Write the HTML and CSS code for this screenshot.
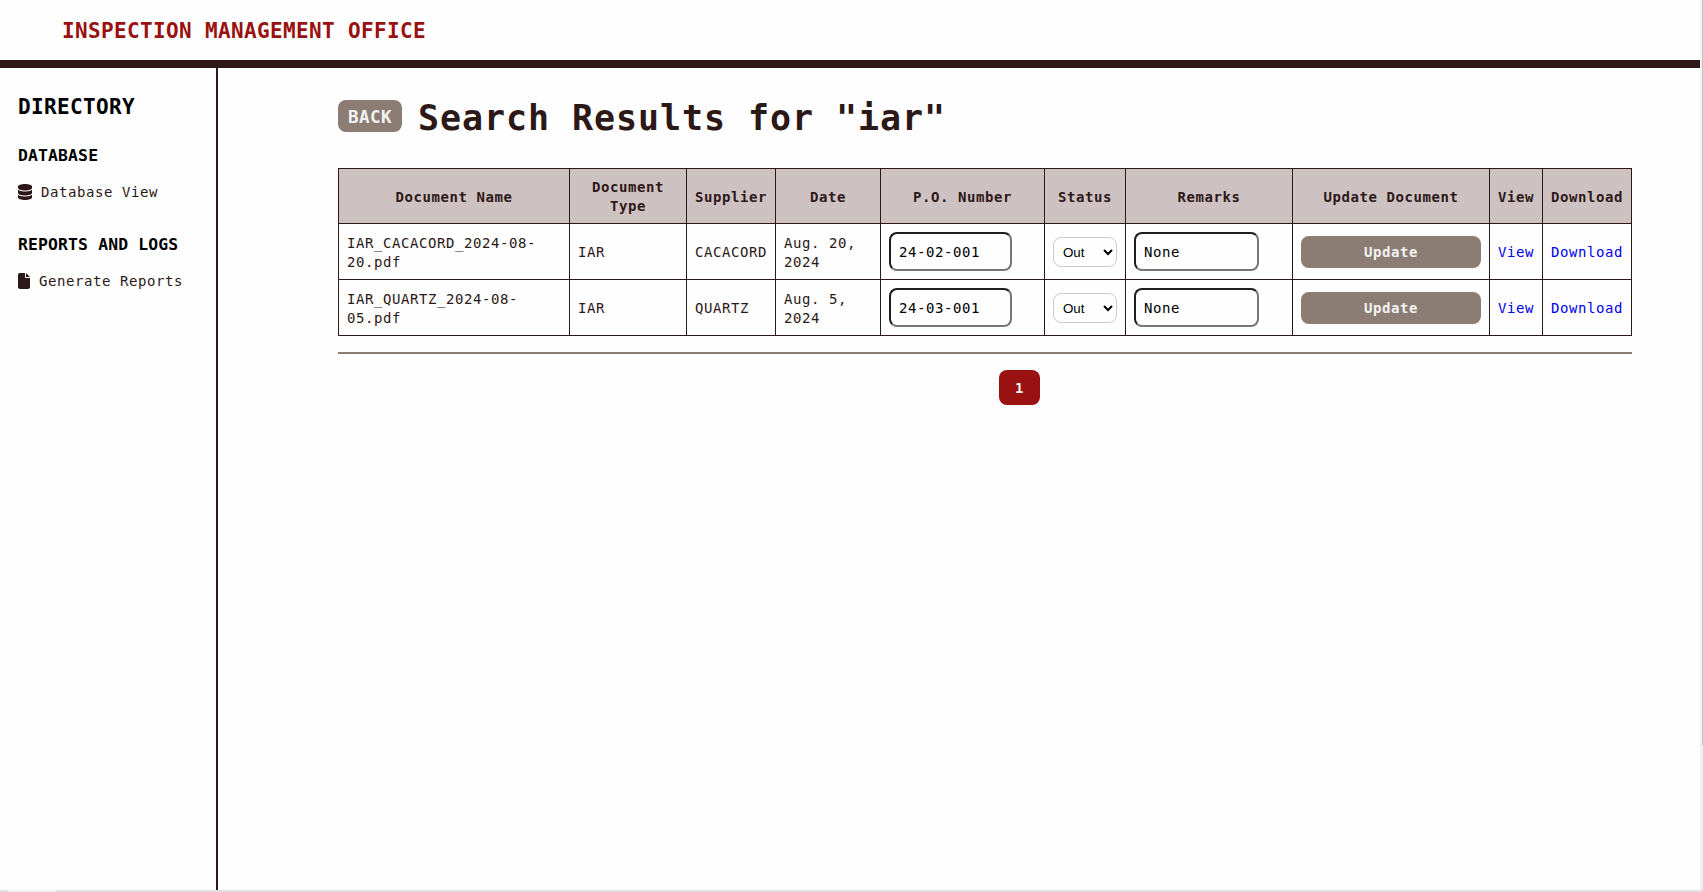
FILE: index.html
```html
<!DOCTYPE html>
<html lang="en">
<head>
<meta charset="utf-8">
<title>Inspection Management Office</title>
<link rel="stylesheet" href="styles.css">
</head>
<body>
<div class="frame">
  <div class="app">
    <header class="topbar"><h2 class="brand">INSPECTION MANAGEMENT OFFICE</h2></header>
    <div class="body">
      <nav class="sidebar">
        <h2 class="directory">DIRECTORY</h2>
        <h3 class="group">DATABASE</h3>
        <a class="nav-link"><svg class="icon-db" viewBox="0 0 448 512"><path d="M448 80v48c0 44.2-100.3 80-224 80S0 172.2 0 128V80C0 35.8 100.3 0 224 0S448 35.8 448 80zM393.2 214.7c20.8-7.4 39.9-16.9 54.8-28.6V288c0 44.2-100.3 80-224 80S0 332.2 0 288V186.1c14.9 11.8 34 21.2 54.8 28.6C99.7 230.7 159.5 240 224 240s124.3-9.3 169.2-25.3zM0 346.1c14.9 11.8 34 21.2 54.8 28.6C99.7 390.7 159.5 400 224 400s124.3-9.3 169.2-25.3c20.8-7.4 39.9-16.9 54.8-28.6V432c0 44.2-100.3 80-224 80S0 476.2 0 432V346.1z"/></svg><span>Database View</span></a>
        <h3 class="group group-reports">REPORTS AND LOGS</h3>
        <a class="nav-link"><svg class="icon-file" viewBox="0 0 384 512"><path d="M0 64C0 28.7 28.7 0 64 0H224V128c0 17.7 14.3 32 32 32H384V448c0 35.3-28.7 64-64 64H64c-35.3 0-64-28.7-64-64V64zm384 64H256V0L384 128z"/></svg><span>Generate Reports</span></a>
      </nav>
      <main class="content">
        <div class="heading"><button class="back">BACK</button><h1 class="title">Search Results for "iar"</h1></div>
        <table class="results">
          <colgroup><col class="c-name"><col class="c-type"><col class="c-supplier"><col class="c-date"><col class="c-po"><col class="c-status"><col class="c-remarks"><col class="c-update"><col class="c-view"><col class="c-download"></colgroup>
          <thead><tr><th>Document Name</th><th>Document Type</th><th>Supplier</th><th>Date</th><th>P.O. Number</th><th>Status</th><th>Remarks</th><th>Update Document</th><th>View</th><th>Download</th></tr></thead>
          <tbody>
            <tr><td>IAR_CACACORD_2024-08-<br>20.pdf</td><td>IAR</td><td>CACACORD</td><td>Aug. 20, 2024</td><td><input class="field po" value="24-02-001"></td><td><select class="status"><option>Out</option></select></td><td><input class="field remarks" value="None"></td><td><button class="update">Update</button></td><td><a class="link">View</a></td><td><a class="link">Download</a></td></tr>
            <tr><td>IAR_QUARTZ_2024-08-<br>05.pdf</td><td>IAR</td><td>QUARTZ</td><td>Aug. 5, 2024</td><td><input class="field po" value="24-03-001"></td><td><select class="status"><option>Out</option></select></td><td><input class="field remarks" value="None"></td><td><button class="update">Update</button></td><td><a class="link">View</a></td><td><a class="link">Download</a></td></tr>
          </tbody>
        </table>
        <hr class="rule">
        <div class="pagination"><a class="page">1</a></div>
      </main>
    </div>
  </div>
  <div class="scroll-y"><div class="thumb-y"></div></div>
  <div class="scroll-x"><div class="thumb-x"></div></div>
</div>
</body>
</html>
```
FILE: styles.css
```css
* { box-sizing: border-box; }
html, body { margin: 0; height: 100%; overflow: hidden; }
body {
  background: #fefefe;
  color: #2d1818;
  font-family: "DejaVu Sans Mono", monospace;
  font-size: 14px;
  letter-spacing: 0.57px;
  line-height: 19px;
}
h1, h2, h3 { margin: 0; }
.frame { display: grid; grid-template-columns: 1fr 3px; grid-template-rows: 1fr 2px; height: 892px; }
.app { display: flex; flex-direction: column; min-width: 0; }
.topbar { height: 68px; border-bottom: 8px solid #2d1818; padding: 17px 62px 0; }
.brand { font-size: 21px; line-height: 28px; letter-spacing: 0.36px; color: #991111; }
.body { flex: 1; display: flex; }
.sidebar { width: 218px; border-right: 2px solid #2d1818; padding: 25px 0 0 18px; white-space: nowrap; }
.directory { color: #000; font-size: 21px; line-height: 28px; letter-spacing: 0.36px; }
.group { color: #000; font-size: 16.4px; line-height: 22px; letter-spacing: 0.15px; margin-top: 24px; }
.group-reports { margin-top: 32px; }
.nav-link { display: flex; align-items: center; gap: 9px; height: 20px; margin-top: 15px; }
.nav-link svg { fill: #2d1818; height: 16px; flex: none; }
.icon-db { width: 14px; }
.icon-file { width: 12px; }
.content { flex: 1; padding: 25px 68px 0 120px; }
.heading { display: flex; align-items: center; gap: 16px; height: 47px; }
button { border: 0; border-radius: 8px; background: #8b7d73; color: #f2f2f2; font-family: inherit; font-weight: bold; padding: 0; height: 32px; }
.back { width: 64px; font-size: 17.5px; letter-spacing: 0.47px; margin-top: -1px; padding-top: 1px; }
.title { font-size: 35px; line-height: 47px; letter-spacing: 0.93px; padding-top: 3px; }
.results { width: 1294px; margin-top: 28px; table-layout: fixed; border-collapse: collapse; }
.results th, .results td { border: 1px solid #2d1818; padding: 9px 8px 7px; }
.results th { background: #cdc1c1; height: 55px; padding: 9px 4px 7px; }
.results td { height: 56px; text-align: left; vertical-align: middle; }
.c-name { width: 231px; }
.c-type { width: 117px; }
.c-supplier { width: 89px; }
.c-date { width: 105px; }
.c-po { width: 164px; }
.c-status { width: 81px; }
.c-remarks { width: 167px; }
.c-update { width: 197px; }
.c-view { width: 53px; }
.c-download { width: 89px; }
.field, .status, .update { display: block; margin: -1px 0 1px; }
.field { height: 39px; border: 2px solid; border-color: #1d1d1f #767676 #767676 #1d1d1f; border-radius: 8px; background: #fefefe; color: #000; font: inherit; letter-spacing: inherit; padding: 0 8px; }
.po { width: 123px; }
.remarks { width: 125px; }
.status { width: 64px; height: 30px; border: 1px solid #ccc; border-radius: 8px; background: #fefefe; color: #000; font-family: "Liberation Sans", Arial, sans-serif; font-size: 13.33px; padding: 1px 0 0 5px; }
.update { width: 180px; font-size: 14px; letter-spacing: 0.57px; }
.link { color: #0000ee; }
.rule { width: 1294px; height: 2px; border: 0; background: #8b7d73; margin: 16px 0; }
.pagination { display: flex; justify-content: center; width: 1294px; padding-left: 69px; }
.page { display: flex; align-items: center; justify-content: center; width: 41px; height: 35px; padding-top: 1px; border-radius: 8px; background: #991111; color: #f2f2f2; font-weight: bold; }
.scroll-y { background: #f0f0f0; padding-left: 2px; }
.thumb-y { height: 745px; background: #c1c1c1; }
.scroll-x { grid-column: 1 / 3; background: #e1e1e1; padding-left: 8px; }
.thumb-x { width: 48px; height: 2px; background: #f2f2f2; }
```
